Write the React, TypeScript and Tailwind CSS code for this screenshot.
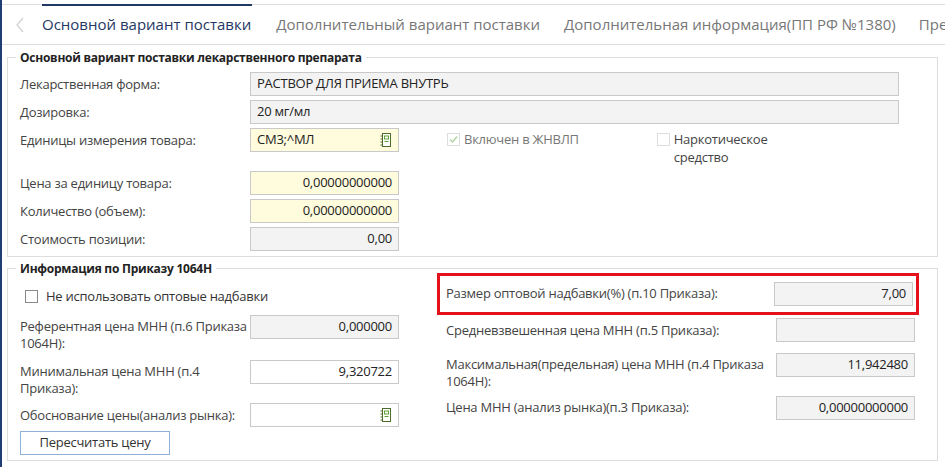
import React from "react";

const F = { fontFamily: '"Open Sans", "Noto Sans", sans-serif' };

function Icon() {
  return (
    <svg width="12" height="14" viewBox="0 0 12 14" className="shrink-0">
      <rect x="2.5" y="0.5" width="8" height="13" fill="#fff" stroke="#4a6b2a" />
      <rect x="4.5" y="3" width="4" height="3" fill="none" stroke="#5fa036" />
      <line x1="4.5" y1="8.5" x2="8.5" y2="8.5" stroke="#5fa036" />
      <line x1="0.5" y1="3" x2="2.5" y2="3" stroke="#4a6b2a" />
      <line x1="0.5" y1="6" x2="2.5" y2="6" stroke="#4a6b2a" />
      <line x1="0.5" y1="9" x2="2.5" y2="9" stroke="#4a6b2a" />
      <line x1="0.5" y1="12" x2="2.5" y2="12" stroke="#4a6b2a" />
    </svg>
  );
}

function Field({ v = "", w = "w-[149px]", bg = "bg-[#f3f3f3]", right = true, icon = false }: any) {
  return (
    <div className={`${w} shrink-0 h-[24px] border border-[#c9c9c9] ${bg} flex items-center px-[6px] text-[13px] text-[#222] ${right ? "justify-end" : "justify-between"}`}>
      <span>{v}</span>
      {icon && <Icon />}
    </div>
  );
}

function Box({ checked = false, light = false }: any) {
  return (
    <div className={`w-[13px] h-[13px] border ${light ? "border-[#ddd]" : "border-[#888]"} bg-white flex items-center justify-center shrink-0`}>
      {checked && (
        <svg width="9" height="9" viewBox="0 0 9 9"><path d="M1 4.5 L3.5 7 L8 1.5" fill="none" stroke="#b5d3a8" strokeWidth="1.5" /></svg>
      )}
    </div>
  );
}

function Row({ label, children, h = "h-[28px]" }: any) {
  return (
    <div className={`flex items-center ${h}`}>
      <div className="w-[230px] text-[13px] text-[#444] leading-[16px]">{label}</div>
      {children}
    </div>
  );
}

export default function App() {
  return (
    <div style={F} className="w-[945px] h-[467px] bg-white relative overflow-hidden border-l-2 border-[#1f3f73] text-[#333] tracking-[-0.25px]">
      <div className="border-t border-[#ddd] mt-[4px] relative">
        <div className="absolute left-[40px] top-[-1px] w-[210px] h-[2px] bg-[#1f3864]" />
      </div>
      <div className="flex items-center h-[40px] border-b border-[#ddd] text-[15px] whitespace-nowrap tracking-normal">
        <svg width="10" height="18" viewBox="0 0 10 18" className="ml-[13px] mr-[17px] shrink-0"><path d="M8 2 L2 9 L8 16" fill="none" stroke="#d0d0d0" strokeWidth="1.2" /></svg>
        <span className="text-[#1f3864]">Основной вариант поставки</span>
        <span className="ml-[25px] text-[#777]">Дополнительный вариант поставки</span>
        <span className="ml-[24px] text-[#777]">Дополнительная информация(ПП РФ №1380)</span>
        <span className="ml-[23px] text-[#777]">Пре</span>
      </div>

      <div className="mx-[5px] mt-[12px] border border-[#ddd] relative pl-[12px] pt-[12px] pb-[3px] w-[931px]">
        <div className="absolute top-[-9px] left-[8px] bg-white px-[4px] text-[12px] font-bold text-[#222]">Основной вариант поставки лекарственного препарата</div>
        <Row label="Лекарственная форма:"><Field v="РАСТВОР ДЛЯ ПРИЕМА ВНУТРЬ" w="w-[649px]" right={false} /></Row>
        <Row label="Дозировка:"><Field v="20 мг/мл" w="w-[649px]" right={false} /></Row>
        <div className="flex items-start h-[43px] pt-[2px]">
          <div className="w-[230px] text-[13px] text-[#444] pt-[3px]">Единицы измерения товара:</div>
          <Field v="СМ3;^МЛ" bg="bg-[#fffbdd]" right={false} icon />
          <div className="ml-[48px] flex items-start gap-[4px] pt-[5px]"><Box checked light /><span className="text-[13px] text-[#777] leading-[16px] -mt-[2px]">Включен в ЖНВЛП</span></div>
          <div className="ml-[78px] flex items-start gap-[4px] pt-[5px]"><Box light /><span className="text-[13px] text-[#444] leading-[18px] -mt-[3px]">Наркотическое<br />средство</span></div>
        </div>
        <Row label="Цена за единицу товара:"><Field v="0,00000000000" bg="bg-[#fffbdd]" /></Row>
        <Row label="Количество (объем):"><Field v="0,00000000000" bg="bg-[#fffbdd]" /></Row>
        <Row label="Стоимость позиции:"><Field v="0,00" /></Row>
      </div>

      <div className="mx-[5px] mt-[11px] border border-[#ddd] relative pl-[12px] pt-[10px] pb-[5px] w-[931px]">
        <div className="absolute top-[-9px] left-[8px] bg-white px-[4px] text-[12px] font-bold text-[#222]">Информация по Приказу 1064Н</div>
        <div className="flex">
          <div className="w-[426px]">
            <div className="h-[35px] flex items-center gap-[8px] pl-[5px]"><Box /><span className="text-[13px] text-[#333]">Не использовать оптовые надбавки</span></div>
            <div className="h-[46px] flex items-start pt-[1px]">
              <div className="w-[230px] text-[13px] text-[#444] leading-[17px] pt-[3px]">Референтная цена МНН (п.6 Приказа 1064Н):</div>
              <Field v="0,000000" />
            </div>
            <div className="h-[41px] flex items-start">
              <div className="w-[230px] text-[13px] text-[#444] leading-[17px] pt-[3px]">Минимальная цена МНН (п.4 Приказа):</div>
              <Field v="9,320722" bg="bg-white" />
            </div>
            <Row label="Обоснование цены(анализ рынка):"><Field bg="bg-white" right={false} icon /></Row>
          </div>
          <div className="w-[480px]">
            <div className="h-[42px] -ml-[9px] -mt-[6px] w-[482px] border-[3px] border-[#e4111c] flex items-center pl-[6px] pr-[3px] justify-between">
              <span className="text-[13px] text-[#444]">Размер оптовой надбавки(%) (п.10 Приказа):</span>
              <Field v="7,00" w="w-[139px]" />
            </div>
            <div className="h-[39px] flex items-start pt-[4px] -mt-[1px]">
              <div className="w-[330px] text-[13px] text-[#444] pt-[3px]">Средневзвешенная цена МНН (п.5 Приказа):</div>
              <Field w="w-[139px]" />
            </div>
            <div className="h-[41px] flex items-start">
              <div className="w-[330px] pr-[10px] text-[13px] text-[#444] leading-[17px] pt-[3px]">Максимальная(предельная) цена МНН (п.4 Приказа 1064Н):</div>
              <Field v="11,942480" w="w-[139px]" />
            </div>
            <div className="flex items-center h-[28px]">
              <div className="w-[330px] text-[13px] text-[#444]">Цена МНН (анализ рынка)(п.3 Приказа):</div>
              <Field v="0,00000000000" w="w-[139px]" />
            </div>
          </div>
        </div>
        <button className="mt-[1px] w-[150px] h-[24px] border border-[#8fb0d8] bg-white text-[13px] text-[#333]">Пересчитать цену</button>
      </div>
    </div>
  );
}
